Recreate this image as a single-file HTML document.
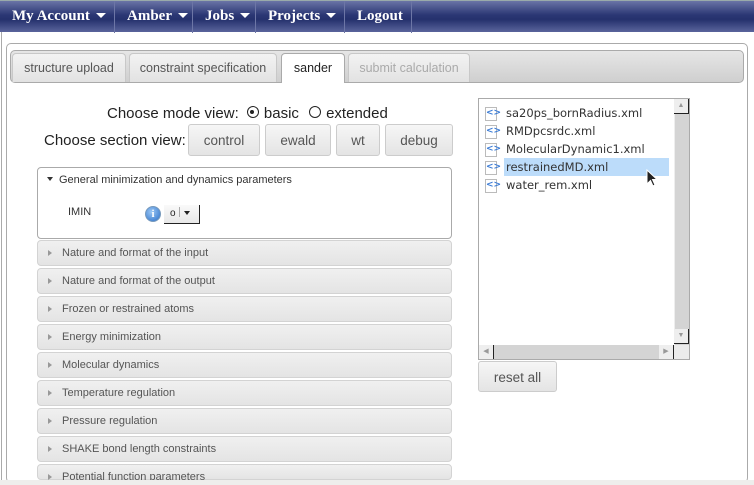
<!DOCTYPE html>
<html style="overflow:hidden;height:485px"><head><style>
*{box-sizing:border-box}
body{margin:0;width:754px;height:485px;overflow:hidden;background:#fff;font-family:"Liberation Sans",sans-serif;position:relative}
.nav{position:absolute;left:0;top:0;width:754px;height:32px;background:linear-gradient(#6a74a6,#2b3774 45%,#25316d 60%,#5a649c);border-top:1px solid #9aa;}
.nav span{position:absolute;top:0;height:32px;line-height:31px;color:#fff;font-family:"Liberation Serif",serif;font-weight:bold;font-size:15px;border-right:1px solid #6d76a6;padding-left:12px}
.car{display:inline-block;border-left:5px solid transparent;border-right:5px solid transparent;border-top:5px solid #fff;margin-left:6px;vertical-align:2px}
.lb{position:absolute;left:1px;top:32px;width:1px;height:450px;background:#aaa}
.panel{position:absolute;left:6px;top:43px;width:742px;height:440px;border:1px solid #aaa;border-radius:5px}
.tabbar{position:absolute;left:10px;top:50px;width:734px;height:33px;border:1px solid #aaa;border-radius:5px;background:linear-gradient(#e6e6e6,#cfcfcf)}
.tab{position:absolute;top:53px;height:29px;border:1px solid #c8c8c8;border-bottom:none;border-radius:4px 4px 0 0;background:linear-gradient(#f3f3f3,#e2e2e2);color:#555;font-size:12.5px;text-align:center;line-height:28px}
.btn{position:absolute;height:32px;border:1px solid #ccc;border-radius:3px;background:linear-gradient(#f6f6f6,#e4e4e4);color:#555;font-size:13.5px;text-align:center;line-height:31px}
.t{position:absolute;font-size:15px;color:#222;white-space:nowrap}
.acc{position:absolute;left:37px;width:415px;height:26px;border:1px solid #d3d3d3;border-radius:4px;background:linear-gradient(#f0f0f0,#e4e4e4);font-size:11px;color:#555;line-height:24px;padding-left:10px}
.acc i{display:inline-block;border-top:3.5px solid transparent;border-bottom:3.5px solid transparent;border-left:4px solid #999;margin-right:10px}
.list{position:absolute;left:478px;top:98px;width:212px;height:262px;border:1px solid #aaa;background:#fff}
.it{position:absolute;left:6px;font-size:11.5px;color:#333;font-family:"DejaVu Sans",sans-serif;height:18px;line-height:17px;padding-left:21px;width:185px}
.ic{position:absolute;left:0;top:2px;width:12px;height:14px;border:1px solid #bbb;background:#fff;color:#3a7bd5;font-size:9px;line-height:11px;font-weight:bold;text-align:center}
</style></head><body>
<div class="nav">
<span style="left:0;width:115px">My Account<i class="car"></i></span>
<span style="left:115px;width:78px">Amber<i class="car"></i></span>
<span style="left:193px;width:63px">Jobs<i class="car"></i></span>
<span style="left:256px;width:89px">Projects<i class="car"></i></span>
<span style="left:345px;width:67px">Logout</span>
</div>
<div class="lb"></div>
<div class="panel"></div>
<div class="tabbar"></div>
<div class="tab" style="left:12px;width:114px">structure upload</div>
<div class="tab" style="left:129px;width:148px">constraint specification</div>
<div class="tab" style="left:281px;width:64px;background:#fff;color:#222;height:30px;border-color:#aaa">sander</div>
<div class="tab" style="left:348px;width:122px;color:#aaa">submit calculation</div>

<div class="t" style="left:107px;top:105px">Choose mode view: <span style="display:inline-block;width:12px;height:12px;border:1.5px solid #222;border-radius:50%;position:relative;margin:0 5px 0 4px;vertical-align:0"><b style="position:absolute;left:2.5px;top:2.5px;width:4px;height:4px;border-radius:50%;background:#222"></b></span>basic <span style="display:inline-block;width:12px;height:12px;border:1.5px solid #222;border-radius:50%;margin:0 5px 0 6px"></span>extended</div>
<div class="t" style="left:44px;top:132px">Choose section view:</div>
<div class="btn" style="left:188px;width:72px;top:124px">control</div>
<div class="btn" style="left:265px;width:66px;top:124px">ewald</div>
<div class="btn" style="left:336px;width:44px;top:124px">wt</div>
<div class="btn" style="left:385px;width:68px;top:124px">debug</div>

<div style="position:absolute;left:37px;top:167px;width:415px;height:72px;border:1px solid #aaa;border-radius:4px;background:#fff"></div>
<div class="t" style="left:47px;top:174px;font-size:11px;color:#333"><span style="display:inline-block;border-left:3.5px solid transparent;border-right:3.5px solid transparent;border-top:4px solid #333;margin-right:6px;vertical-align:2px"></span>General minimization and dynamics parameters</div>
<div class="t" style="left:68px;top:206px;font-size:11px;color:#333">IMIN</div>
<div style="position:absolute;left:145px;top:206px;width:16px;height:16px;border-radius:50%;background:radial-gradient(circle at 40% 35%,#9cc8f5,#2a6fc9);border:1px solid #7799bb;color:#fff;font-size:11px;font-weight:bold;text-align:center;line-height:14px;font-family:'Liberation Serif',serif">i</div>
<div style="position:absolute;left:164px;top:205px;width:36px;height:19px;border-right:1px solid #222;border-bottom:1px solid #222;background:linear-gradient(#fafafa,#e8e8e8);font-size:10px;line-height:18px;padding-left:6px;color:#222">o<span style="display:inline-block;width:1px;height:10px;background:#aaa;margin:0 4px 0 3px;vertical-align:-1px"></span><span style="display:inline-block;border-left:3.5px solid transparent;border-right:3.5px solid transparent;border-top:4px solid #222;vertical-align:1px"></span></div>

<div class="acc" style="top:240px"><i></i>Nature and format of the input</div>
<div class="acc" style="top:268px"><i></i>Nature and format of the output</div>
<div class="acc" style="top:296px"><i></i>Frozen or restrained atoms</div>
<div class="acc" style="top:324px"><i></i>Energy minimization</div>
<div class="acc" style="top:352px"><i></i>Molecular dynamics</div>
<div class="acc" style="top:380px"><i></i>Temperature regulation</div>
<div class="acc" style="top:408px"><i></i>Pressure regulation</div>
<div class="acc" style="top:436px"><i></i>SHAKE bond length constraints</div>
<div class="acc" style="top:464px;height:16px"><i></i>Potential function parameters</div>

<div class="list">
<div style="position:absolute;left:25px;top:59px;width:165px;height:18px;background:#bcdcfa"></div>
<div class="it" style="top:6px"><span class="ic">&lt;&gt;</span>sa20ps_bornRadius.xml</div>
<div class="it" style="top:24px"><span class="ic">&lt;&gt;</span>RMDpcsrdc.xml</div>
<div class="it" style="top:42px"><span class="ic">&lt;&gt;</span>MolecularDynamic1.xml</div>
<div class="it" style="top:60px"><span class="ic">&lt;&gt;</span>restrainedMD.xml</div>
<div class="it" style="top:78px"><span class="ic">&lt;&gt;</span>water_rem.xml</div>
<div style="position:absolute;left:195px;top:0;width:15px;height:246px;background:#d4d4d4;border-left:1px solid #eee"></div>
<div style="position:absolute;left:195px;top:0;width:15px;height:15px;background:#eee;border-right:1px solid #222;border-bottom:1px solid #222;color:#999;font-size:7px;text-align:center;line-height:14px">▲</div>
<div style="position:absolute;left:195px;top:230px;width:15px;height:15px;background:#eee;border-right:1px solid #222;border-bottom:1px solid #222;color:#999;font-size:7px;text-align:center;line-height:14px">▼</div>
<div style="position:absolute;left:0;top:246px;width:195px;height:14px;background:#d4d4d4"></div>
<div style="position:absolute;left:0;top:246px;width:15px;height:14px;background:#eee;border-right:1px solid #222;color:#999;font-size:7px;text-align:center;line-height:13px">◀</div>
<div style="position:absolute;left:180px;top:246px;width:15px;height:14px;background:#eee;border-right:1px solid #222;color:#999;font-size:7px;text-align:center;line-height:13px">▶</div>
<div style="position:absolute;left:195px;top:246px;width:15px;height:14px;background:#ebebeb"></div>
</div>
<svg style="position:absolute;left:646px;top:169px" width="14" height="20" viewBox="0 0 14 20"><path d="M1 1 L1 15 L4.5 11.5 L7 17 L9 16 L6.5 10.5 L11 10.5 Z" fill="#222" stroke="#fff" stroke-width="1"/></svg>
<div class="btn" style="left:478px;top:361px;width:79px;height:31px;font-size:13.5px">reset all</div>
<div style="position:absolute;left:0;top:480px;width:754px;height:5px;background:#eeeeec;z-index:5"></div>
</body></html>
